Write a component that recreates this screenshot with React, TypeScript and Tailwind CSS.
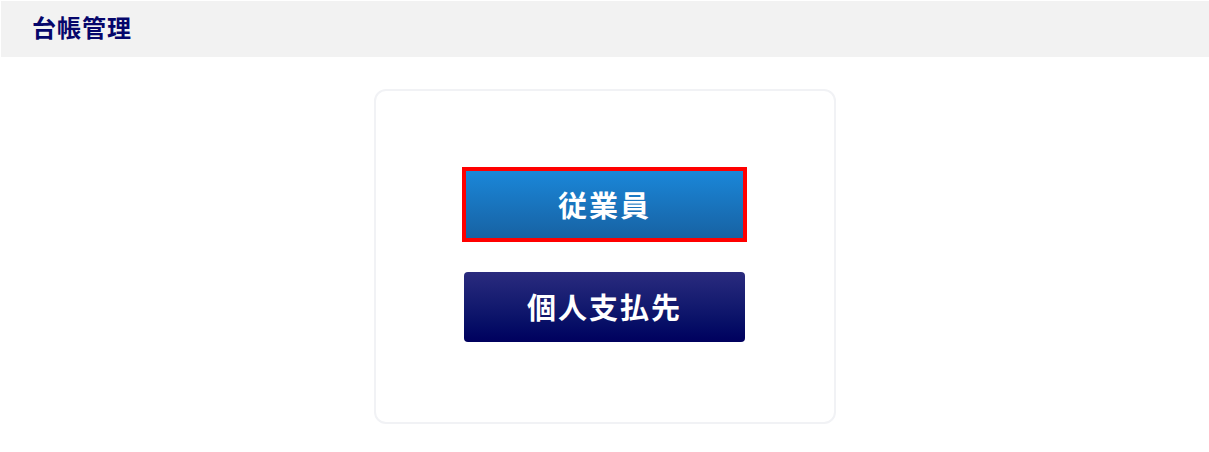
const jp = "font-['Noto_Sans_CJK_JP','Noto_Sans',sans-serif]";

function LedgerButton({ label, active }: { label: string; active?: boolean }) {
  if (active) {
    return (
      <button className="h-[75px] w-[285px] border-4 border-[#ff0000] bg-gradient-to-b from-[#1a87d9] to-[#1762a3]">
        <span className="text-[29px] font-bold tracking-[2px] text-white">{label}</span>
      </button>
    );
  }
  return (
    <button className="h-[70px] w-[281px] rounded-[4px] bg-gradient-to-b from-[#2a2b7e] to-[#00005e]">
      <span className="text-[29px] font-bold tracking-[2px] text-white">{label}</span>
    </button>
  );
}

export default function App() {
  return (
    <div className={`min-h-[452px] w-full bg-white ${jp}`}>
      <header className="ml-px mt-px flex h-[56px] items-center bg-[#f2f2f2] pb-[4px] pl-[31px]">
        <h1 className="text-[24px] font-bold tracking-[1px] text-[#06066b]">台帳管理</h1>
      </header>
      <main className="flex justify-center pt-[32px]">
        <div className="flex h-[335px] w-[462px] flex-col items-center rounded-[12px] border-2 border-[#f1f2f5] pt-[76px]">
          <LedgerButton label="従業員" active />
          <div className="mt-[30px]">
            <LedgerButton label="個人支払先" />
          </div>
        </div>
      </main>
    </div>
  );
}
